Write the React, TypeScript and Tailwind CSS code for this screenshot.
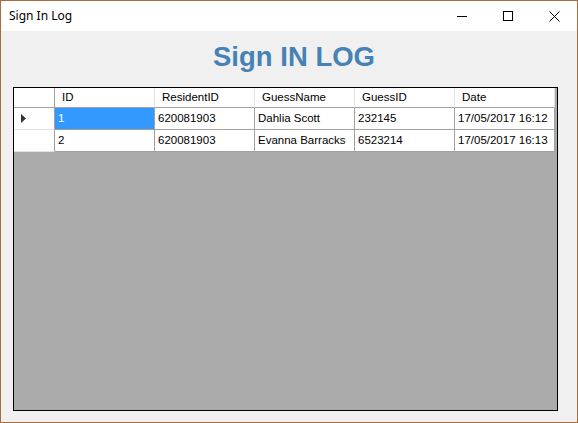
const columns = ["ID", "ResidentID", "GuessName", "GuessID", "Date"];

const rows = [
  ["1", "620081903", "Dahlia Scott", "232145", "17/05/2017 16:12"],
  ["2", "620081903", "Evanna Barracks", "6523214", "17/05/2017 16:13"],
];

function TitleBar() {
  return (
    <div className="flex h-[30px] items-center justify-between bg-white">
      <span className="pl-2 text-[12px] text-black [font-family:'Noto_Sans',sans-serif]">
        Sign In Log
      </span>
      <div className="flex h-full items-center">
        <div className="flex h-full w-[46px] items-center justify-center">
          <div className="h-px w-[10px] bg-black" />
        </div>
        <div className="flex h-full w-[46px] items-center justify-center">
          <div className="h-[10px] w-[10px] border border-black" />
        </div>
        <div className="flex h-full w-[46px] items-center justify-center">
          <svg width="11" height="11" viewBox="0 0 11 11">
            <path d="M0.5 0.5 L10.5 10.5 M10.5 0.5 L0.5 10.5" stroke="black" strokeWidth="1" />
          </svg>
        </div>
      </div>
    </div>
  );
}

function Grid() {
  return (
    <div className="mx-3 h-[324px] w-[545px] border border-black bg-[#ababab] text-[11.5px] text-black [font-family:'Liberation_Sans',Arial,sans-serif]">
      <div className="flex h-[20px]">
        <div className="w-[41px] border-r border-b border-[#a0a0a0] bg-white" />
        {columns.map((c) => (
          <div
            key={c}
            className="flex w-[100px] items-center border-r border-b border-r-[#e3e3e3] border-b-[#a0a0a0] bg-white pl-[7px] pt-px"
          >
            {c}
          </div>
        ))}
      </div>
      {rows.map((r, i) => (
        <div key={i} className="flex h-[22px]">
          <div className="flex w-[41px] items-center border-r border-b border-r-[#a0a0a0] border-b-[#e3e3e3] bg-white pl-[7px]">
            {i === 0 && (
              <svg width="6" height="9" viewBox="0 0 6 9">
                <path d="M0 0 L5 4.5 L0 9 Z" fill="#333" />
              </svg>
            )}
          </div>
          {r.map((v, j) => (
            <div
              key={j}
              className={
                i === 0 && j === 0
                  ? "flex w-[100px] items-center border-r border-b border-[#a0a0a0] bg-[#3399ff] pl-[3px] pt-px text-white"
                  : "flex w-[100px] items-center border-r border-b border-[#a0a0a0] bg-white pl-[3px] pt-px"
              }
            >
              {v}
            </div>
          ))}
        </div>
      ))}
    </div>
  );
}

export default function App() {
  return (
    <div className="flex h-[423px] w-[578px] flex-col border border-[#a86d3b] bg-[#f0f0f0]">
      <TitleBar />
      <div className="flex flex-1 flex-col">
        <div className="flex justify-center pl-[10px] pt-[12px] pb-[17px]">
          <h1 className="text-[27.5px] leading-[27px] font-bold text-[#4682b4] [font-family:'Liberation_Sans',Arial,sans-serif]">
            Sign IN LOG
          </h1>
        </div>
        <Grid />
      </div>
    </div>
  );
}
